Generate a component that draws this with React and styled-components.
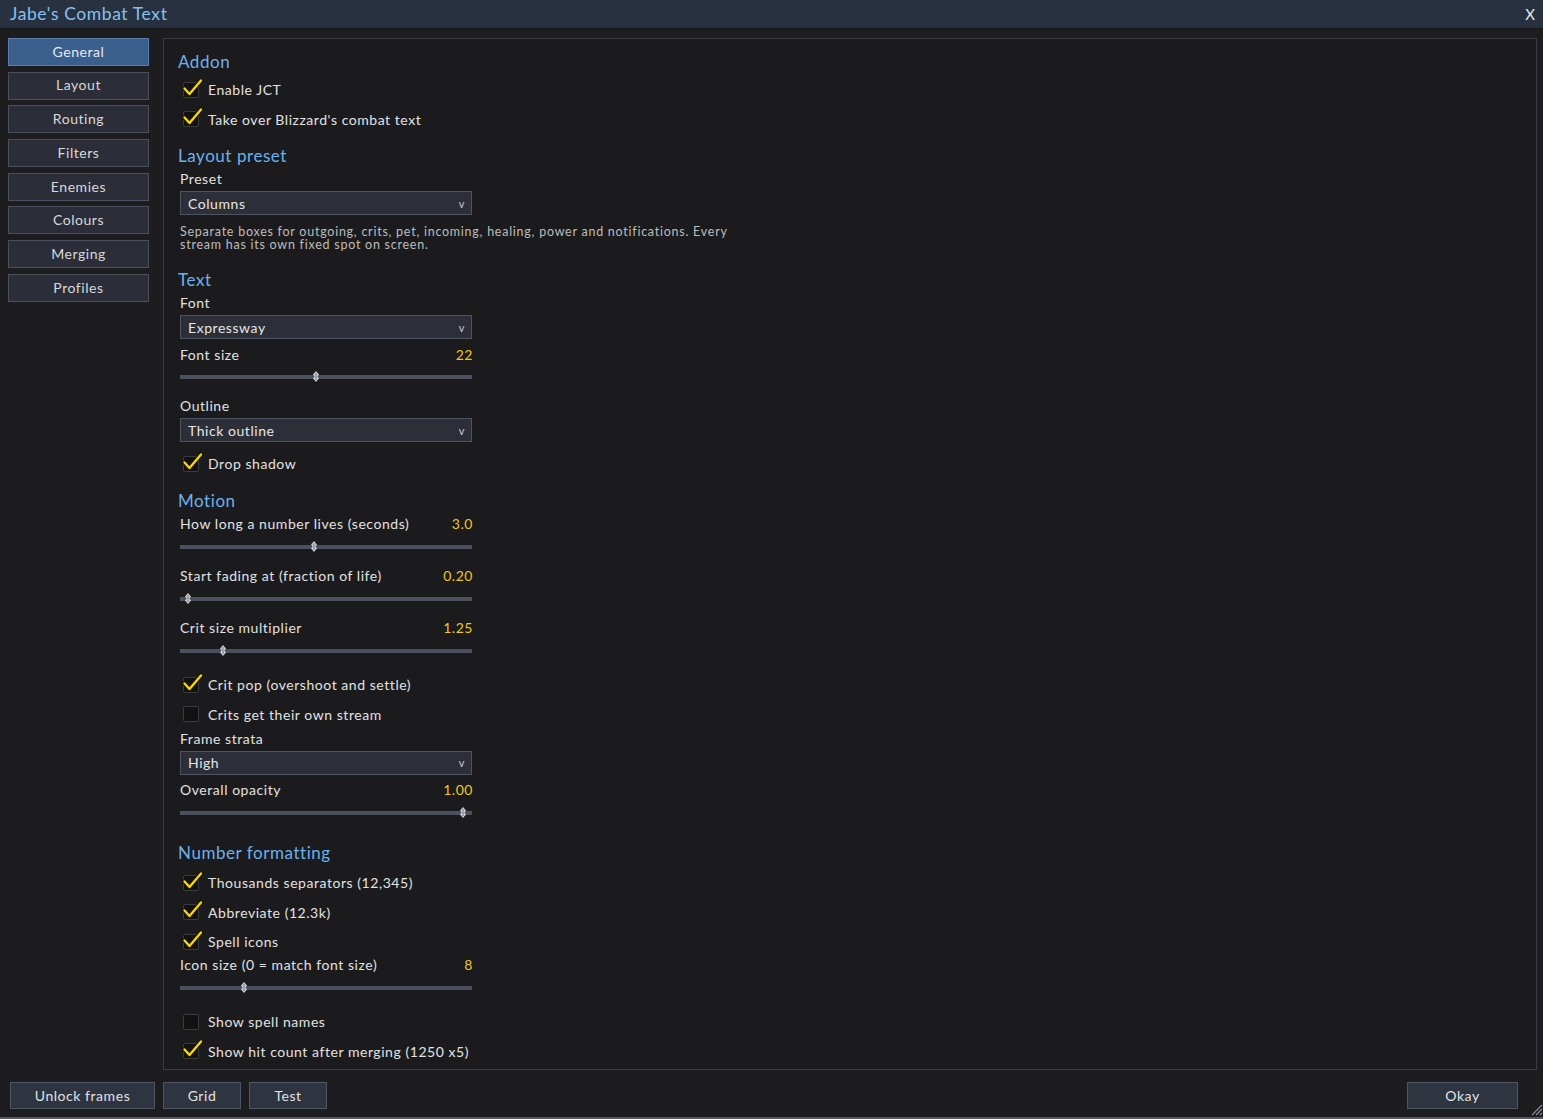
import React from 'react'
import styled, { createGlobalStyle } from 'styled-components'

const GlobalStyle = createGlobalStyle`
  html, body {
    margin: 0;
    padding: 0;
    background: #1c1c1f;
  }
  body {
    font-family: 'Lato', 'Open Sans', sans-serif;
    color: #e2e2e2;
  }
  * { box-sizing: border-box; }
`

const tabs = [
  'General',
  'Layout',
  'Routing',
  'Filters',
  'Enemies',
  'Colours',
  'Merging',
  'Profiles',
]

const Check = ({ checked }) => (
  <CheckBox>
    {checked && (
      <CheckMark width="22" height="20" viewBox="0 0 22 20">
        <path
          d="M2.5 10.5 L7.5 16 L19 2.5"
          fill="none"
          stroke="#1a1400"
          strokeWidth="4.5"
          strokeLinecap="round"
          strokeLinejoin="round"
        />
        <path
          d="M2.5 10.5 L7.5 16 L19 2.5"
          fill="none"
          stroke="#f3d513"
          strokeWidth="2.4"
          strokeLinecap="round"
          strokeLinejoin="round"
        />
      </CheckMark>
    )}
  </CheckBox>
)

const CheckRow = ({ checked, children }) => (
  <CheckLine>
    <Check checked={checked} />
    <CheckLabel>{children}</CheckLabel>
  </CheckLine>
)

const Dropdown = ({ label, value, gapBelow = 5 }) => (
  <>
    <FieldLabel>{label}</FieldLabel>
    <Select gapBelow={gapBelow}>
      <span>{value}</span>
      <Caret>v</Caret>
    </Select>
  </>
)

const Slider = ({ label, value, pos, tight }) => (
  <SliderBlock tight={tight}>
    <SliderHead>
      <span>{label}</span>
      <Value>{value}</Value>
    </SliderHead>
    <Track>
      <Thumb style={{ left: `${pos * 100}%` }} width="6" height="11" viewBox="0 0 6 11">
        <path d="M3 0 L6 3.5 L4.5 5.5 L6 7.5 L3 11 L0 7.5 L1.5 5.5 L0 3.5 Z" fill="#c9ccd3" />
        <path d="M3 2 L3 9" stroke="#6f7480" strokeWidth="1" />
      </Thumb>
    </Track>
  </SliderBlock>
)

const App = () => (
  <>
    <GlobalStyle />
    <Window>
      <TitleBar>
        <Title>Jabe's Combat Text</Title>
        <Close>X</Close>
      </TitleBar>
      <Body>
        <Sidebar>
          {tabs.map((t, i) => (
            <Tab key={t} active={i === 0}>
              {t}
            </Tab>
          ))}
        </Sidebar>
        <Panel>
          <Heading>Addon</Heading>
          <CheckRow checked>Enable JCT</CheckRow>
          <CheckRow checked>Take over Blizzard's combat text</CheckRow>

          <Heading>Layout preset</Heading>
          <Dropdown label="Preset" value="Columns" />
          <Note>
            Separate boxes for outgoing, crits, pet, incoming, healing, power and notifications. Every
            stream has its own fixed spot on screen.
          </Note>

          <Heading>Text</Heading>
          <Dropdown label="Font" value="Expressway" />
          <Slider label="Font size" value="22" pos={0.466} />
          <Dropdown label="Outline" value="Thick outline" gapBelow={7} />
          <CheckRow checked>Drop shadow</CheckRow>

          <Heading>Motion</Heading>
          <Slider label="How long a number lives (seconds)" value="3.0" pos={0.459} />
          <Slider label="Start fading at (fraction of life)" value="0.20" pos={0.027} />
          <Slider label="Crit size multiplier" value="1.25" pos={0.147} />
          <CheckRow checked>Crit pop (overshoot and settle)</CheckRow>
          <CheckRow>Crits get their own stream</CheckRow>
          <Dropdown label="Frame strata" value="High" />
          <Slider label="Overall opacity" value="1.00" pos={0.97} />

          <Heading wide>Number formatting</Heading>
          <CheckRow checked>Thousands separators (12,345)</CheckRow>
          <CheckRow checked>Abbreviate (12.3k)</CheckRow>
          <CheckRow checked>Spell icons</CheckRow>
          <Slider label="Icon size (0 = match font size)" value="8" pos={0.22} tight />
          <CheckRow>Show spell names</CheckRow>
          <CheckRow checked>Show hit count after merging (1250 x5)</CheckRow>
        </Panel>
      </Body>
      <Footer>
        <FooterGroup>
          <Button width={145}>Unlock frames</Button>
          <Button width={78}>Grid</Button>
          <Button width={78}>Test</Button>
        </FooterGroup>
        <Button width={111}>Okay</Button>
      </Footer>
      <Grip width="14" height="14" viewBox="0 0 14 14">
        <path d="M13 3 L3 13 M13 7 L7 13 M13 11 L11 13" stroke="#8a8d94" strokeWidth="1.2" />
      </Grip>
    </Window>
  </>
)

const Window = styled.div`
  position: relative;
  height: 100vh;
  display: flex;
  flex-direction: column;
  background: #1d1c1f;
  border-bottom: 2px solid #55585e;
  overflow: hidden;
`

const TitleBar = styled.div`
  height: 29px;
  flex: none;
  display: flex;
  align-items: center;
  justify-content: space-between;
  padding: 0 8px 2px 10px;
  background: #283140;
  border-bottom: 1px solid #151618;
`

const Title = styled.div`
  font-size: 17.5px;
  color: #86c0ef;
  letter-spacing: 0.6px;
`

const Close = styled.div`
  font-size: 15px;
  color: #e8e8e8;
  margin-top: 1px;
`

const Body = styled.div`
  flex: 1;
  display: flex;
  padding: 9px 6px 0 8px;
  min-height: 0;
`

const Sidebar = styled.div`
  width: 141px;
  flex: none;
  display: flex;
  flex-direction: column;
  gap: 5.7px;
`

const Tab = styled.div`
  height: 28px;
  padding-bottom: 1.5px;
  display: flex;
  align-items: center;
  justify-content: center;
  font-size: 14px;
  letter-spacing: 0.55px;
  color: ${p => (p.active ? '#e6eaf0' : '#d9d9d9')};
  background: ${p => (p.active ? '#3b5f8d' : '#2b2e38')};
  border: 1px solid ${p => (p.active ? '#5a7daa' : '#4a4f5c')};
`

const Panel = styled.div`
  flex: 1;
  margin-left: 14px;
  padding: 1px 15px 0 15px;
  background: #1b1b1d;
  border: 1px solid #393c43;
  display: flex;
  flex-direction: column;
  align-items: flex-start;
`

const Heading = styled.div`
  padding-top: ${p => (p.wide ? 15 : 13)}px;
  margin: ${p => (p.wide ? -3 : 0)}px 0 0 -1px;
  height: ${p => (p.wide ? 24 : 22)}px;
  box-sizing: content-box;
  line-height: 18px;
  font-size: 17px;
  letter-spacing: 0.55px;
  color: #6cb1ee;
`

const CheckLine = styled.div`
  height: 29.6px;
  flex: none;
  display: flex;
  align-items: center;
  padding-left: 4px;
`

const CheckBox = styled.div`
  position: relative;
  width: 16px;
  height: 16px;
  border: 1px solid #3a3b3e;
  border-radius: 2px;
  background: #121213;
`

const CheckMark = styled.svg`
  position: absolute;
  left: -2px;
  top: -5px;
`

const CheckLabel = styled.span`
  margin-left: 9px;
  font-size: 14px;
  letter-spacing: 0.55px;
  color: #e2e2e2;
`

const FieldLabel = styled.div`
  line-height: 18px;
  padding: 1px 0 0 1px;
  margin-bottom: 3px;
  font-size: 14px;
  letter-spacing: 0.55px;
  color: #e2e2e2;
`

const Select = styled.div`
  width: 292px;
  height: 24px;
  margin-left: 1px;
  margin-bottom: ${p => p.gapBelow}px;
  display: flex;
  align-items: center;
  justify-content: space-between;
  padding: 0 6px 0 7px;
  background: #2c2f38;
  border: 1px solid #4d5361;
  font-size: 14px;
  letter-spacing: 0.55px;
  color: #e6e6e6;
`

const Caret = styled.span`
  font-size: 11px;
  color: #c8c8c8;
`

const Note = styled.div`
  width: 560px;
  padding: 5px 0 7px 1px;
  font-size: 12.5px;
  line-height: 13px;
  letter-spacing: 0.75px;
  color: #bdbdbd;
`

const SliderBlock = styled.div`
  width: 292px;
  margin: ${p => (p.tight ? -2 : 0)}px 0 0 1px;
  height: 52px;
  flex: none;
`

const SliderHead = styled.div`
  height: 20px;
  display: flex;
  align-items: center;
  justify-content: space-between;
  font-size: 14px;
  letter-spacing: 0.55px;
  color: #e2e2e2;
`

const Value = styled.span`
  color: #f1c61d;
  margin-right: -1px;
`

const Track = styled.div`
  position: relative;
  margin-top: 11px;
  height: 4px;
  background: #4a505e;
`

const Thumb = styled.svg`
  position: absolute;
  top: -4px;
  margin-left: -3px;
`

const Footer = styled.div`
  flex: none;
  height: 47px;
  display: flex;
  align-items: flex-start;
  justify-content: space-between;
  padding: 12px 25px 0 10px;
`

const FooterGroup = styled.div`
  display: flex;
  gap: 8px;
`

const Button = styled.div`
  width: ${p => p.width}px;
  height: 27px;
  padding-bottom: 1px;
  display: flex;
  align-items: center;
  justify-content: center;
  background: #2f3441;
  border: 1px solid #4e5565;
  font-size: 14px;
  letter-spacing: 0.55px;
  color: #e2e2e2;
`

const Grip = styled.svg`
  position: absolute;
  right: 0;
  bottom: 1px;
`

export default App
